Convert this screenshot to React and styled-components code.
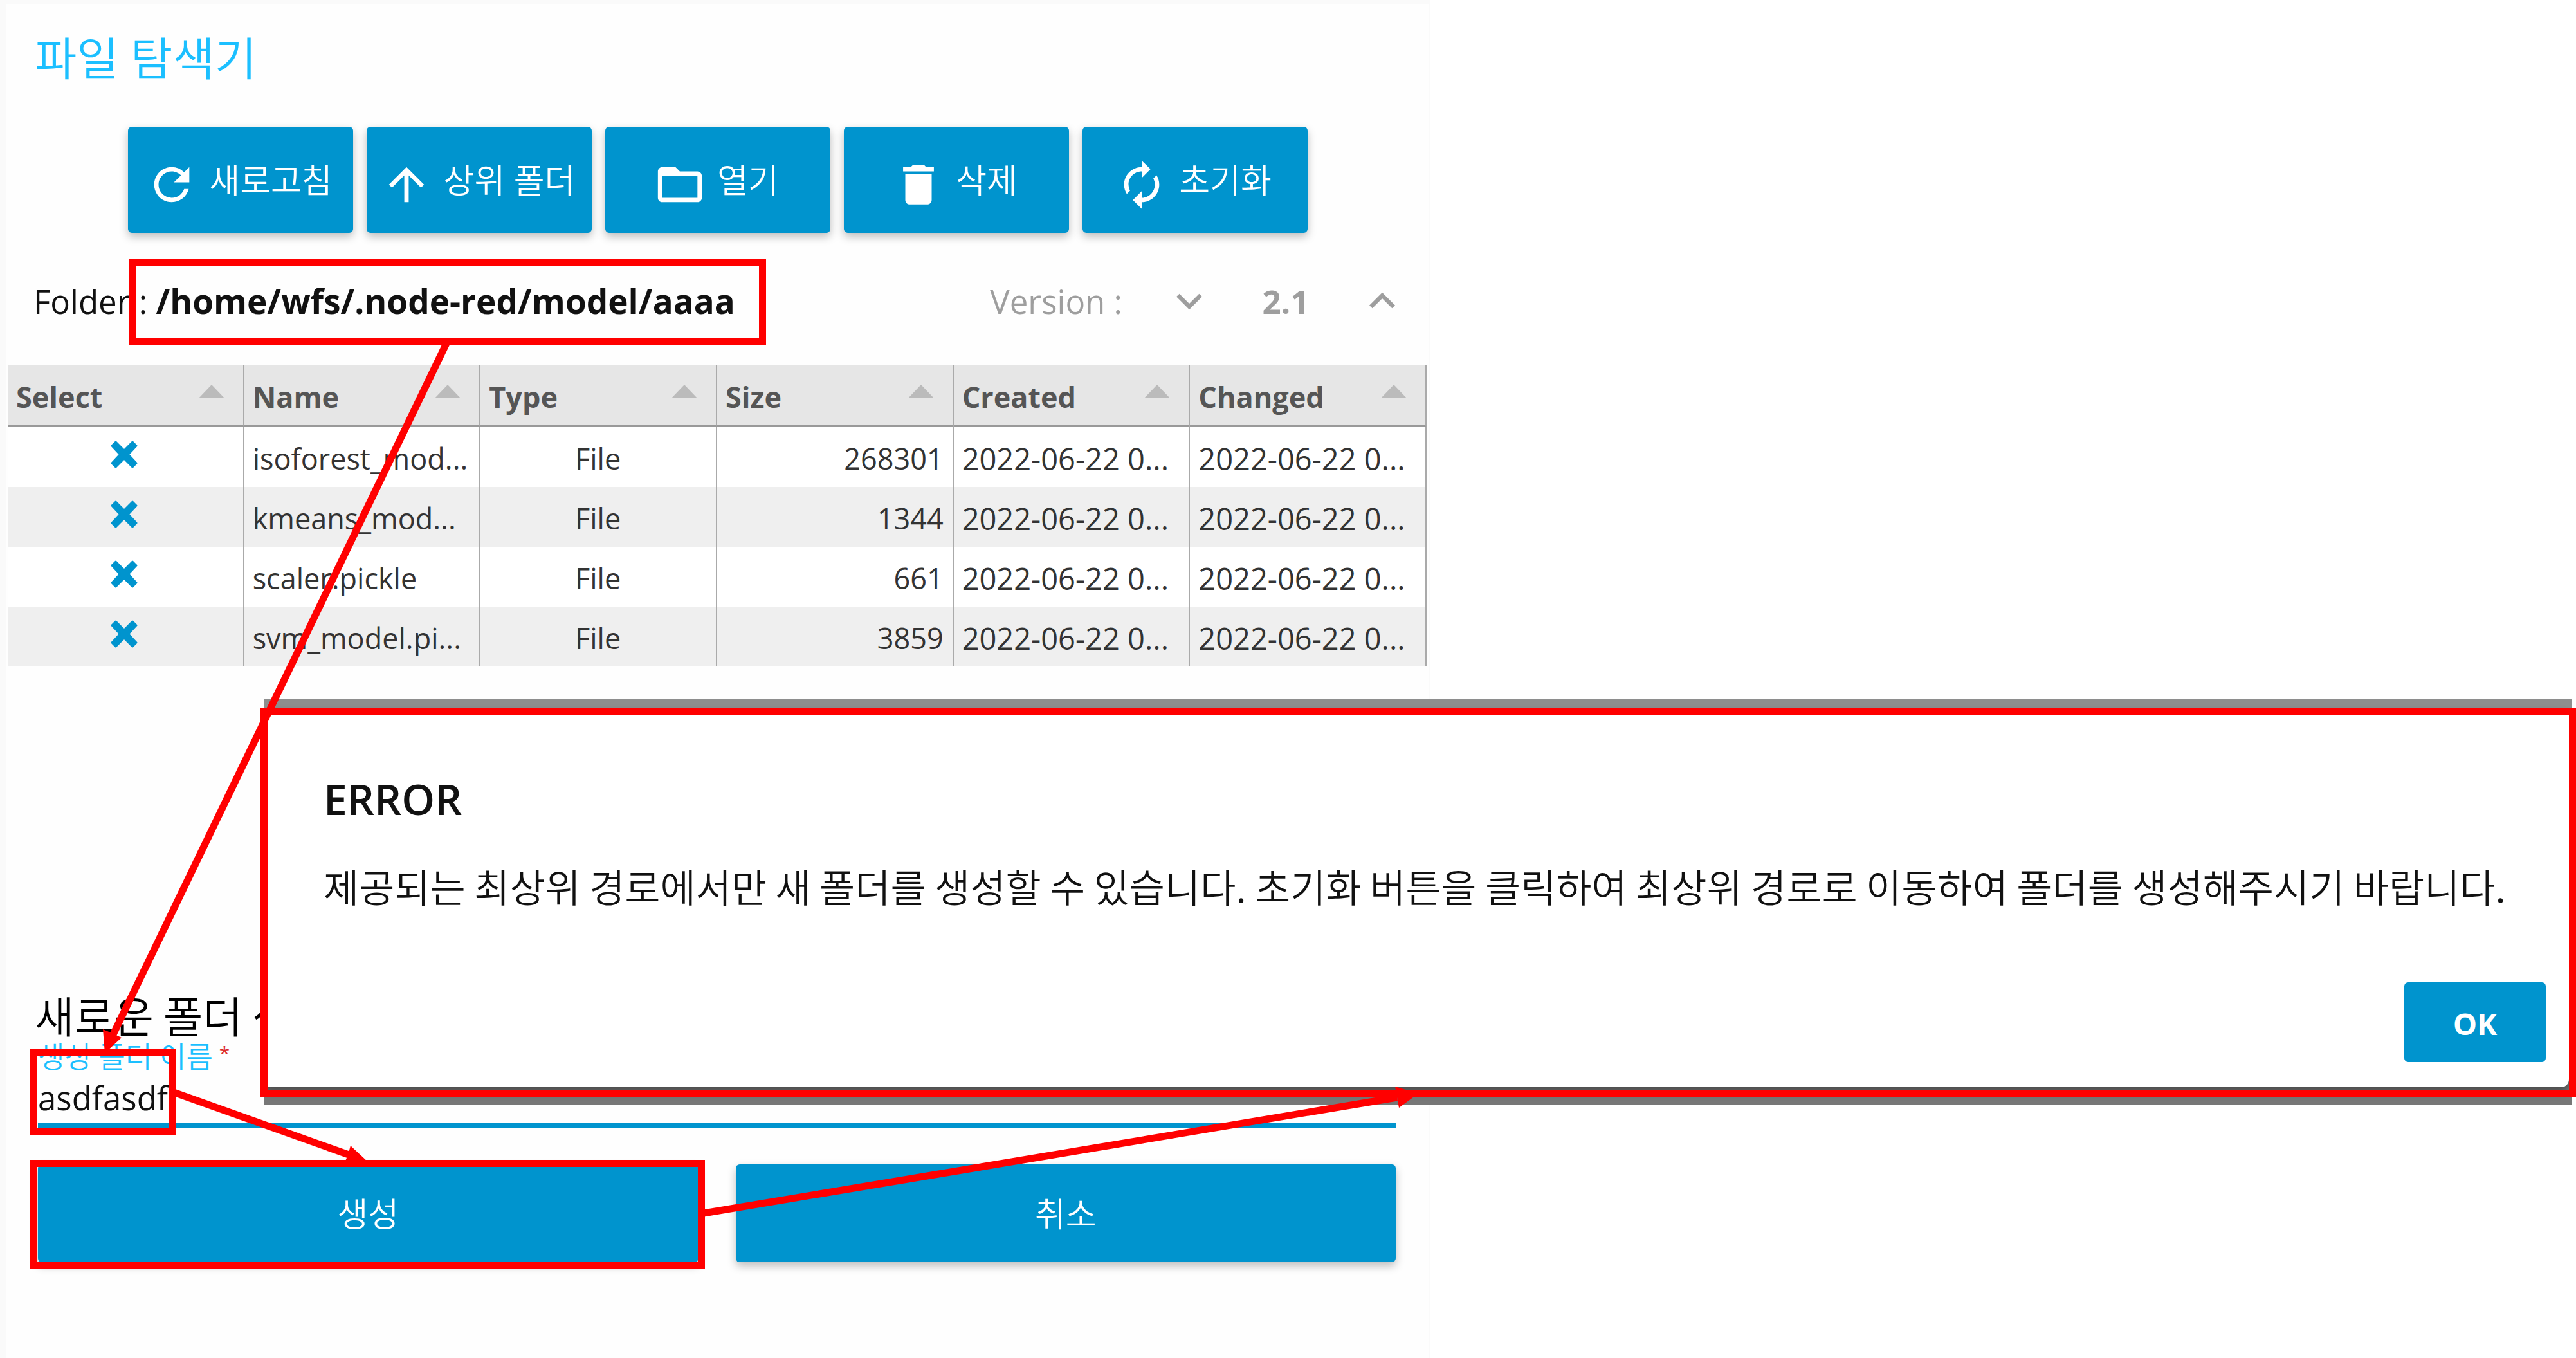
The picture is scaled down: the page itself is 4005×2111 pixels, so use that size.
import React from "react";
import styled, { createGlobalStyle } from "styled-components";
import {
  MdRefresh,
  MdArrowUpward,
  MdFolderOpen,
  MdDelete,
  MdAutorenew,
  MdExpandMore,
  MdExpandLess,
} from "react-icons/md";

const blue = "#0094ce";
const sky = "#1bbfff";
const red = "#ff0000";
const korean = `"Noto Sans CJK KR", "Open Sans", sans-serif`;

const GlobalStyle = createGlobalStyle`
  * { box-sizing: border-box; }
  body {
    margin: 0;
    background: #ffffff;
    color: #111111;
    font-family: "Open Sans", "Noto Sans CJK KR", sans-serif;
  }
  button, input { font: inherit; }
`;

const Page = styled.main`
  position: relative;
  min-height: 100vh;
  overflow: hidden;
`;

const Frame = styled.div`
  display: flex;
  width: 100%;
  max-width: 2224px;
  min-height: 100vh;
  padding: 6px 2px 0 9px;
  background: #fafafa;
`;

const Panel = styled.section`
  flex: 1;
  min-width: 0;
  background: #fefefe;
`;

const PanelTitle = styled.h1`
  margin: 34px 45px 57px;
  color: ${sky};
  font-size: 71px;
  font-weight: 350;
  line-height: 100px;
`;

const Toolbar = styled.div`
  display: flex;
  justify-content: center;
  gap: 21px;
`;

const Button = styled.button`
  display: flex;
  align-items: center;
  justify-content: center;
  border: 0;
  padding: 0;
  border-radius: 6px;
  background: ${blue};
  color: #ffffff;
  font-size: 52px;
  font-weight: 350;
  line-height: 72px;
  white-space: nowrap;
  cursor: pointer;
  box-shadow: 0 6px 14px rgba(0, 0, 0, 0.26);
`;

const ToolButton = styled(Button)`
  gap: 17px;
  width: 350px;
  height: 165px;
  padding-right: 4px;

  svg {
    width: 82px;
    height: 96px;
    padding-top: 14px;
  }
`;

const PathRow = styled.div`
  display: flex;
  align-items: center;
  height: 128px;
  margin: 41px 0 37px;
  padding: 2px 33px 0 43px;
  font-size: 51px;
  line-height: 72px;
`;

const Path = styled.span`
  white-space: pre;

  strong {
    font-size: 53px;
  }
`;

const Version = styled.div`
  display: flex;
  align-items: center;
  margin-left: auto;
  color: #9e9e9e;
`;

const VersionLabel = styled.span`
  margin-right: 64px;
`;

const VersionValue = styled.strong`
  width: 220px;
  text-align: center;
`;

const StepButton = styled.button`
  display: flex;
  padding: 0;
  border: 0;
  background: none;
  color: inherit;
  cursor: pointer;

  svg {
    width: 80px;
    height: 80px;
  }
`;

const FileTable = styled.table`
  width: calc(100% - 7px);
  margin-left: 3px;
  table-layout: fixed;
  border-collapse: separate;
  border-spacing: 0;
  font-size: 45px;
  line-height: 64px;
`;

const HeadCell = styled.th`
  height: 96px;
  padding: 4px 29px 0 13px;
  border-right: 2px solid #aaaaaa;
  border-bottom: 3px solid #999999;
  background: #e6e6e6;
  color: #555555;
  text-align: left;
`;

const HeadContent = styled.div`
  display: flex;
  align-items: center;
  justify-content: space-between;
`;

const SortMark = styled.span`
  margin-bottom: 16px;
  border-right: 20px solid transparent;
  border-bottom: 21px solid #bbbbbb;
  border-left: 20px solid transparent;
`;

const Row = styled.tr`
  background: #ffffff;

  &:nth-child(even) {
    background: #efefef;
  }
`;

const Cell = styled.td`
  height: 93px;
  padding: ${(p) => (p.$icon ? "0 4px 8px 0" : "5px 14px 0 13px")};
  border-right: 2px solid #aaaaaa;
  overflow: hidden;
  color: #333333;
  text-align: ${(p) => p.$align || "left"};
  text-overflow: ellipsis;
  white-space: nowrap;
  line-height: 0;

  > span {
    line-height: 64px;
  }
`;

const DateCell = styled(Cell)`
  font-size: 47px;
`;

const Form = styled.form`
  margin-top: 501px;
  padding: 0 52px 0 50px;
`;

const FormTitle = styled.h2`
  margin: 0 0 4px -5px;
  color: #000000;
  font-family: ${korean};
  font-size: 67px;
  font-weight: 350;
  line-height: 80px;
`;

const FieldLabel = styled.label`
  display: block;
  color: ${sky};
  font-size: 45px;
  font-weight: 350;
  line-height: 44px;
`;

const Required = styled.sup`
  margin-left: 10px;
  color: #dd2c2c;
  font-size: 30px;
  font-weight: 400;
  line-height: 0;
  vertical-align: 12px;
`;

const TextInput = styled.input`
  display: block;
  width: 100%;
  height: 88px;
  padding: 0;
  border: 0;
  border-bottom: 7px solid ${blue};
  border-radius: 0;
  outline: 0;
  background: transparent;
  color: #111111;
  font-size: 51px;
`;

const FormActions = styled.div`
  display: grid;
  grid-template-columns: 1fr 1fr;
  gap: 58px;
  margin-top: 57px;
`;

const FormButton = styled(Button)`
  height: 152px;
  padding-top: 2px;
`;

const DialogBackdrop = styled.div`
  position: absolute;
  top: 1087px;
  right: 6px;
  left: 410px;
  padding: 13px 5px 28px 0;
  overflow: hidden;
  background: linear-gradient(#8e8e8e 0 50%, #777777 50%);
`;

const Dialog = styled.section`
  display: flex;
  flex-direction: column;
  min-height: 590px;
  padding: 97px 36px 39px 93px;
  border-radius: 12px;
  background: #ffffff;
  box-shadow: 0 8px 12px rgba(0, 0, 0, 0.35);
`;

const DialogTitle = styled.h2`
  margin: 0 0 48px;
  color: #111111;
  font-size: 66px;
  font-weight: 600;
  line-height: 88px;
`;

const DialogText = styled.p`
  margin: 0;
  color: #111111;
  font-family: ${korean};
  font-size: 60px;
  font-weight: 350;
  line-height: 88px;
`;

const DialogButton = styled(Button)`
  width: 220px;
  height: 124px;
  margin-top: auto;
  margin-left: auto;
  padding-top: 4px;
  box-shadow: none;
  font-size: 47px;
  font-weight: 700;
`;

const Annotations = styled.div`
  position: absolute;
  inset: 0;
  pointer-events: none;
`;

const Highlight = styled.div`
  position: absolute;
  top: ${(p) => p.$top}px;
  left: ${(p) => p.$left}px;
  ${(p) => (p.$width ? `width: ${p.$width}px;` : "right: 0;")}
  height: ${(p) => p.$height}px;
  border: 11px solid ${red};
`;

const Arrows = styled.svg`
  position: absolute;
  top: 0;
  left: 0;
  width: 2223px;
  height: 2111px;
  fill: ${red};
  stroke: ${red};
`;

const CrossMark = () => (
  <svg width="42" height="43" viewBox="0 0 42 43" role="img" aria-label="no">
    <path
      d="M8 2 21 15 34 2 40 8 27.500 21.500 40 35 34 41 21 28 8 41 2 35 14.500 21.500 2 8Z"
      fill={blue}
      stroke={blue}
      strokeWidth="3"
      strokeLinejoin="round"
    />
  </svg>
);

const tools = [
  { label: "새로고침", Icon: MdRefresh },
  { label: "상위 폴더", Icon: MdArrowUpward },
  { label: "열기", Icon: MdFolderOpen },
  { label: "삭제", Icon: MdDelete },
  { label: "초기화", Icon: MdAutorenew },
];

const columns = ["Select", "Name", "Type", "Size", "Created", "Changed"];

const files = [
  { name: "isoforest_mod...", size: 268301 },
  { name: "kmeans_mod...", size: 1344 },
  { name: "scaler.pickle", size: 661 },
  { name: "svm_model.pi...", size: 3859 },
];

const date = "2022-06-22 0...";

export default function App() {
  return (
    <Page>
      <GlobalStyle />
      <Frame>
        <Panel>
          <PanelTitle>파일 탐색기</PanelTitle>
          <Toolbar>
            {tools.map(({ label, Icon }) => (
              <ToolButton key={label} type="button">
                <Icon />
                <span>{label}</span>
              </ToolButton>
            ))}
          </Toolbar>
          <PathRow>
            <Path>
              Folder : <strong>/home/wfs/.node-red/model/aaaa</strong>
            </Path>
            <Version>
              <VersionLabel>Version :</VersionLabel>
              <StepButton type="button" aria-label="Previous version">
                <MdExpandMore />
              </StepButton>
              <VersionValue>2.1</VersionValue>
              <StepButton type="button" aria-label="Next version">
                <MdExpandLess />
              </StepButton>
            </Version>
          </PathRow>
          <FileTable>
            <thead>
              <tr>
                {columns.map((name) => (
                  <HeadCell key={name} scope="col">
                    <HeadContent>
                      {name}
                      <SortMark />
                    </HeadContent>
                  </HeadCell>
                ))}
              </tr>
            </thead>
            <tbody>
              {files.map((file) => (
                <Row key={file.name}>
                  <Cell $icon $align="center">
                    <CrossMark />
                  </Cell>
                  <Cell><span>{file.name}</span></Cell>
                  <Cell $align="center"><span>File</span></Cell>
                  <Cell $align="right"><span>{file.size}</span></Cell>
                  <DateCell><span>{date}</span></DateCell>
                  <DateCell><span>{date}</span></DateCell>
                </Row>
              ))}
            </tbody>
          </FileTable>
          <Form onSubmit={(e) => e.preventDefault()}>
            <FormTitle>새로운 폴더 생성</FormTitle>
            <FieldLabel htmlFor="folder-name">
              생성 폴더 이름<Required>*</Required>
            </FieldLabel>
            <TextInput id="folder-name" type="text" defaultValue="asdfasdf" />
            <FormActions>
              <FormButton type="submit">생성</FormButton>
              <FormButton type="button">취소</FormButton>
            </FormActions>
          </Form>
        </Panel>
      </Frame>

      <DialogBackdrop>
        <Dialog role="alertdialog" aria-labelledby="error-title">
          <DialogTitle id="error-title">ERROR</DialogTitle>
          <DialogText>
            제공되는 최상위 경로에서만 새 폴더를 생성할 수 있습니다. 초기화 버튼을 클릭하여 최상위 경로로 이동하여 폴더를 생성해주시기 바랍니다.
          </DialogText>
          <DialogButton type="button">OK</DialogButton>
        </Dialog>
      </DialogBackdrop>

      <Annotations aria-hidden="true">
        <Highlight $left={200} $top={403} $width={991} $height={133} />
        <Highlight $left={47} $top={1631} $width={227} $height={134} />
        <Highlight $left={46} $top={1803} $width={1050} $height={169} />
        <Highlight $left={405} $top={1100} $height={606} />
        <Arrows viewBox="0 0 2223 2111">
          <g strokeWidth="11">
            <path d="M694 534 176 1608" />
            <path d="M270 1698 545 1796" />
            <path d="M1094 1886 2172 1706" />
          </g>
          <g stroke="none">
            <path d="M160 1600 174 1606 189 1613 163 1637Z" />
            <path d="M545 1781 541 1795 534 1812 573 1807Z" />
            <path d="M2169 1689 2172 1706 2175 1722 2205 1700Z" />
          </g>
        </Arrows>
      </Annotations>
    </Page>
  );
}
